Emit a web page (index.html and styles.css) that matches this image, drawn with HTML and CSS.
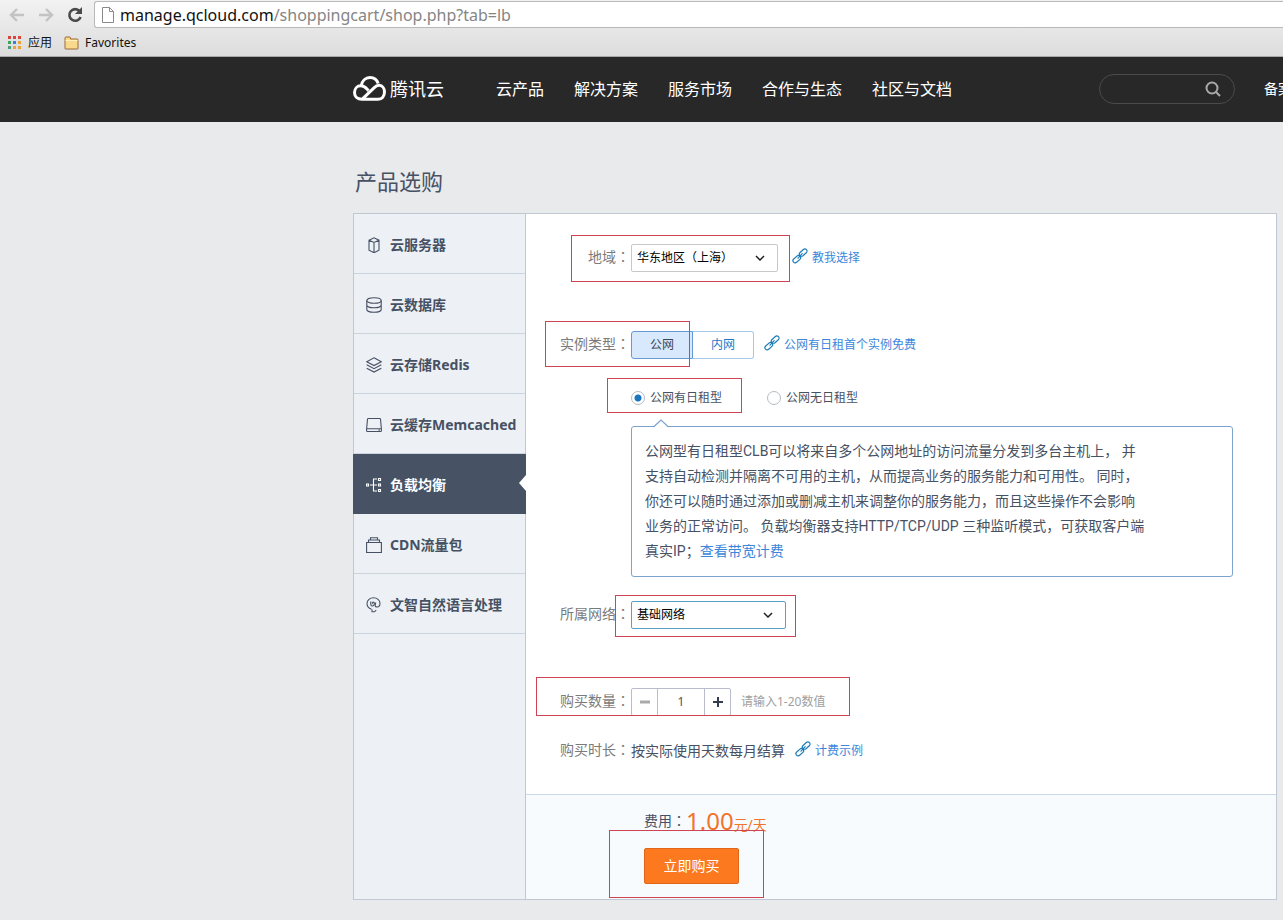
FILE: index.html
```html
<!DOCTYPE html>
<html lang="zh-CN">
<head>
<meta charset="utf-8">
<title>产品选购</title>
<link rel="stylesheet" href="styles.css">
</head>
<body>
<svg class="defs" width="0" height="0" aria-hidden="true">
  <symbol id="link" viewBox="0 0 16 16">
    <g fill="none" stroke="currentColor" stroke-width="1.2" stroke-linecap="round">
      <rect x="6.8" y="2.400" width="8.800" height="4.400" rx="2.200" transform="rotate(-42 11.200 4.600)"/>
      <rect x="0.400" y="9" width="8.800" height="4.400" rx="2.200" transform="rotate(-42 4.800 11.200)"/>
      <path d="M6 10.200 10.200 5.700"/>
    </g>
  </symbol>
  <symbol id="chevron" viewBox="0 0 10 6">
    <path d="M1 1l4 4 4-4" fill="none" stroke="#222" stroke-width="1.5"/>
  </symbol>
</svg>

<div class="browser">
  <div class="toolbar">
    <button class="tool" type="button" aria-label="后退"><svg width="16" height="14" viewBox="0 0 16 14"><path d="M8 1 2 7l6 6M2 7h13" fill="none" stroke="#c3c3c3" stroke-width="2.4"/></svg></button>
    <button class="tool" type="button" aria-label="前进"><svg width="16" height="14" viewBox="0 0 16 14"><path d="m8 1 6 6-6 6M14 7H1" fill="none" stroke="#c3c3c3" stroke-width="2.4"/></svg></button>
    <button class="tool reload" type="button" aria-label="刷新"><svg width="16" height="16" viewBox="0 0 16 16"><path d="M12.6 4.2A5.8 5.8 0 1 0 13.6 10" fill="none" stroke="#4a4a4a" stroke-width="2.6"/><path d="M15 0v7H8z" fill="#4a4a4a"/></svg></button>
    <div class="address">
      <svg width="12" height="16" viewBox="0 0 12 16"><path d="M.5.5h7l4 4v11H.5z" fill="#fff" stroke="#8a8a8a"/><path d="M7.5.5v4h4" fill="none" stroke="#8a8a8a"/></svg>
      <span class="url"><span class="host">manage.qcloud.com</span>/shoppingcart/shop.php?tab=lb</span>
    </div>
  </div>
  <div class="bookmarks">
    <a class="bookmark" href="#"><svg width="14" height="14" viewBox="0 0 14 14"><path fill="#d9453d" d="M0 0h3v3H0zM5 0h3v3H5zM10 0h3v3h-3z"/><path fill="#3aa757" d="M0 5h3v3H0z"/><path fill="#3b7de0" d="M5 5h3v3H5z"/><path fill="#e8a33a" d="M10 5h3v3h-3zM5 10h3v3H5zM10 10h3v3h-3z"/><path fill="#4f9a78" d="M0 10h3v3H0z"/></svg>应用</a>
    <a class="bookmark" href="#"><svg width="15" height="14" viewBox="0 0 15 14"><path d="M1 12.5V2q0-1 1-1h3.5q1 0 1 1v1H13q1 0 1 1v8.500q0 .5-.5.5h-12q-.5 0-.5-.5z" fill="#fbd98a" stroke="#9a6a35"/><path d="M1.500 4.500h12" stroke="#fff0c4"/></svg>Favorites</a>
  </div>
</div>

<header class="site">
  <a class="logo" href="#">
    <svg width="33" height="25" viewBox="0 0 33 25"><g fill="none" stroke="#fff" stroke-width="3"><path d="M8.300 9.800C9 4.800 12.500 1.600 17 1.600c4 0 7 2.500 8.200 6"/><path d="m9 23.300 12-11.500c2-1.900 3.700-2.600 5.300-2.500 3 .2 5.200 3 5.200 6.500 0 4.300-2.500 7.500-6.500 7.500H9c-4.500 0-7.500-2.700-7.500-6.700 0-4 2.800-6.800 6.300-6.800 2.700 0 4.500 1.300 6.200 3.200l1.500 1.600"/></g></svg>
    <span>腾讯云</span>
  </a>
  <nav class="menu">
    <a href="#">云产品</a><a href="#">解决方案</a><a href="#">服务市场</a><a href="#">合作与生态</a><a href="#">社区与文档</a>
  </nav>
  <div class="search">
    <input type="text" aria-label="搜索">
    <button type="button" aria-label="搜索"><svg width="16" height="16" viewBox="0 0 16 16"><g fill="none" stroke="#aaa" stroke-width="2"><circle cx="7" cy="7" r="5.500"/><path d="m11 11 4 4"/></g></svg></button>
  </div>
  <a class="record" href="#">备案</a>
</header>

<main class="page">
  <h1>产品选购</h1>
  <div class="panel">
    <nav class="side">
      <a href="#"><svg viewBox="0 0 16 16"><path d="M3 3.200 8 .8l5 2.400v10L8.500 15.500h-1L3 13.200zM3 3.200l5 2.300 5-2.300M8 5.500v10"/></svg>云服务器</a>
      <a href="#"><svg viewBox="0 0 16 16"><ellipse cx="8" cy="3.500" rx="7.200" ry="2.800"/><path d="M.8 3.500v9c0 1.500 3.200 2.800 7.200 2.800s7.200-1.300 7.200-2.800v-9M.8 8c0 1.500 3.200 2.800 7.200 2.800s7.200-1.300 7.200-2.800"/></svg>云数据库</a>
      <a href="#"><svg viewBox="0 0 16 16"><path d="M8 .8 15.300 4.700 8 8.600.7 4.700zM.7 7.800 8 11.700l7.300-3.900M.7 11.200 8 15.100l7.300-3.900"/></svg>云存储Redis</a>
      <a href="#"><svg viewBox="0 0 16 16"><path d="M2.300 1.500h11.400q.8 0 .8.800l.9 9.700v1.700q0 .8-.8.800H1.400q-.8 0-.8-.8V12l.9-9.700q0-.8.8-.8zM.7 11.700h14.600M12.500 13.100h1.300"/></svg>云缓存Memcached</a>
      <a class="active" href="#"><svg viewBox="0 0 16 16"><path d="M.5 7h2v2h-2zM12.500 1.500h2v2h-2zM12.500 7h2v2h-2zM12.500 12.500h2v2h-2zM4 8h7M11 2H7.500v12H11"/></svg>负载均衡</a>
      <a href="#"><svg viewBox="0 0 16 16"><path d="M.6 5.500h14.800v10H.6zM2.500 5.500v-2.500h11v2.500M4.500 3V.8h7V3"/></svg>CDN流量包</a>
      <a href="#"><svg viewBox="0 0 16 16"><path d="M5.500 12.200C2.500 11.200 1 9 1 6.500 1 3 4 .8 7.500.8S14 3.200 14 6.200c0 2.200-1.300 3.800-3 3.800-1.500 0-2-.9-1.700-2.300l.4-2.200M5 4.500c-1 3 .2 4.700 1.700 4.500 1.400-.2 1.800-2 1.500-3.500-1.200-1-2.200.2-1.800 1.500M6 12.500v2.300h2.500l1.700-1.600"/></svg>文智自然语言处理</a>
    </nav>

    <form class="content">
      <div class="fields">
        <div class="row">
          <span class="mark mark-region"></span>
          <label class="label" for="region">地域<span class="colon" lang="zh-TW">：</span></label>
          <div class="select">
            <select id="region"><option>华东地区（上海）</option></select>
            <svg width="10" height="6"><use href="#chevron"/></svg>
          </div>
          <a class="help" href="#"><svg width="16" height="16"><use href="#link"/></svg>教我选择</a>
        </div>

        <div class="row spaced">
          <span class="mark mark-type"></span>
          <span class="label">实例类型<span class="colon" lang="zh-TW">：</span></span>
          <div class="segments"><button class="on" type="button">公网</button><button type="button">内网</button></div>
          <a class="help" href="#"><svg width="16" height="16"><use href="#link"/></svg>公网有日租首个实例免费</a>
        </div>

        <div class="indent radios">
          <span class="mark mark-radio"></span>
          <label><input type="radio" name="rent" checked>公网有日租型</label>
          <label><input type="radio" name="rent">公网无日租型</label>
        </div>

        <div class="indent tip">
          <svg class="peak" width="16" height="9" viewBox="0 0 16 9"><path d="M0 9 8 1l8 8z" fill="#fff"/><path d="m.5 8 7.500-7 7.500 7" fill="none" stroke="#7da2ce" stroke-width="1.200"/></svg>
          公网型有日租型CLB可以将来自多个公网地址的访问流量分发到多台主机上， 并<br>
          支持自动检测并隔离不可用的主机，从而提高业务的服务能力和可用性。 同时，<br>
          你还可以随时通过添加或删减主机来调整你的服务能力，而且这些操作不会影响<br>
          业务的正常访问。 负载均衡器支持HTTP/TCP/UDP 三种监听模式，可获取客户端<br>
          真实IP；<a href="#">查看带宽计费</a>
        </div>

        <div class="row network">
          <span class="mark mark-network"></span>
          <label class="label" for="network">所属网络<span class="colon" lang="zh-TW">：</span></label>
          <div class="select wide">
            <select id="network"><option>基础网络</option></select>
            <svg width="10" height="6"><use href="#chevron"/></svg>
          </div>
        </div>

        <div class="row spaced">
          <span class="mark mark-count"></span>
          <label class="label" for="count">购买数量<span class="colon" lang="zh-TW">：</span></label>
          <div class="stepper">
            <button class="off" type="button" aria-label="减少"><svg width="12" height="12" viewBox="0 0 12 12"><path d="M1 6h10" stroke="currentColor" stroke-width="3"/></svg></button>
            <input id="count" type="text" value="1">
            <button type="button" aria-label="增加"><svg width="12" height="12" viewBox="0 0 12 12"><path d="M1 6h10M6 1v10" stroke="currentColor" stroke-width="2"/></svg></button>
          </div>
          <span class="hint">请输入1-20数值</span>
        </div>

        <div class="row period">
          <span class="label">购买时长<span class="colon" lang="zh-TW">：</span></span>
          <span>按实际使用天数每月结算</span>
          <a class="help" href="#"><svg width="16" height="16"><use href="#link"/></svg>计费示例</a>
        </div>
      </div>

      <div class="checkout">
        <span class="mark mark-buy"></span>
        <div class="price"><span>费用<span class="colon" lang="zh-TW">：</span></span><strong>1.00</strong><em>元/天</em></div>
        <button class="buy" type="submit">立即购买</button>
      </div>
    </form>
  </div>
</main>
</body>
</html>
```
FILE: styles.css
```css
* { box-sizing: border-box; }
body {
  margin: 0;
  background: #e8eaec;
  color: #475164;
  font: 14px/20px "Noto Sans", "Noto Sans CJK SC", sans-serif;
  overflow-x: hidden;
}
a { color: inherit; text-decoration: none; }
button, input, select { font: inherit; color: inherit; margin: 0; }
button { padding: 0; border: 0; background: none; cursor: pointer; }
svg { display: block; flex: none; }
.defs { position: absolute; }

/* browser chrome */
.browser {
  height: 57px;
  background: linear-gradient(#f2f2f2, #dcdcdc);
  border-bottom: 1px solid #a5aaa8;
}
.toolbar { display: flex; align-items: center; gap: 13px; height: 29px; padding-left: 9px; }
.reload { margin-right: -2px; }
.address {
  flex: 1;
  display: flex;
  align-items: center;
  gap: 6px;
  height: 27px;
  padding-left: 7px;
  background: #fff;
  border: 1px solid #b9b9b9;
  border-right: 0;
  border-radius: 3px 0 0 3px;
}
.url { color: #858585; font-size: 16px; white-space: nowrap; }
.host { color: #111; }
.bookmarks { display: flex; gap: 12px; padding: 4px 8px; }
.bookmark { display: flex; align-items: center; gap: 6px; color: #111; font-size: 12px; }

/* site header */
.site {
  display: flex;
  align-items: center;
  height: 65px;
  padding: 0 0 2px 353px;
  overflow: hidden;
  background: #282828;
  color: #fff;
  white-space: nowrap;
}
.logo { display: flex; align-items: center; gap: 4px; font-size: 18px; }
.menu { display: flex; gap: 30px; margin-left: 52px; font-size: 16px; }
.search {
  display: flex;
  align-items: center;
  flex: none;
  width: 136px;
  height: 30px;
  margin-left: auto;
  padding: 0 13px;
  border: 1px solid #4b4b4b;
  border-radius: 15px;
}
.search input { flex: 1; min-width: 0; border: 0; outline: 0; background: none; }
.record { width: 19px; margin-left: 29px; }

/* page */
.page { padding: 44px 6px 20px 353px; }
h1 { margin: 0 0 17px 2px; font-size: 22px; line-height: 30px; font-weight: 400; }
.panel { display: flex; border: 1px solid #c0c9d3; background: #fff; }
.side {
  flex: none;
  width: 172px;
  background: #edf1f6;
  border-right: 1px solid #c0c9d3;
}
.side a {
  display: flex;
  align-items: center;
  gap: 8px;
  height: 60px;
  padding: 2px 0 0 12px;
  border-bottom: 1px solid #cad5de;
  font-weight: 700;
  white-space: nowrap;
}
.side svg { width: 16px; height: 16px; fill: none; stroke: currentColor; stroke-width: 1.1; }
.side .active {
  position: relative;
  margin: 0 -1px;
  padding-left: 13px;
  border-color: #475365;
  background: #475365;
  color: #fff;
}
.side .active::after {
  content: "";
  position: absolute;
  right: 0;
  top: 21px;
  border: 8px solid transparent;
  border-right: 7px solid #fff;
  border-left: 0;
}
.content { flex: 1; min-width: 0; }
.fields { padding: 30px 43px 29px 0; }
.row { position: relative; display: flex; align-items: center; height: 28px; white-space: nowrap; }
.spaced { margin-top: 59px; }
.label { width: 105px; padding: 0 1px 2px 0; color: #7b7b7b; text-align: right; }
.colon { font-family: "Noto Sans CJK TC", sans-serif; line-height: 1; }
.indent { position: relative; margin-left: 105px; }

.select { position: relative; width: 147px; height: 28px; }
.select select {
  appearance: none;
  width: 100%;
  height: 28px;
  padding: 0 5px;
  border: 1px solid #c8c8c8;
  border-radius: 2px;
  background: #fff;
  color: #000;
  font-size: 12px;
}
.select svg { position: absolute; right: 13px; top: 11px; pointer-events: none; }
.select.wide { width: 155px; }
.select.wide select { border-color: #5a9fc8; }

.help { display: flex; align-items: center; gap: 4px; margin-left: 10px; color: #3c87da; font-size: 12px; }
.select + .help { margin-left: 14px; }
.help svg { margin-bottom: 4px; color: #1d7cb8; }

.segments { display: flex; width: 123px; height: 28px; }
.segments button {
  flex: 1;
  border: 1px solid #a9c8e8;
  border-left: 0;
  border-radius: 0 3px 3px 0;
  color: #1f78c4;
  font-size: 12px;
}
.segments .on {
  border: 1px solid #659bd4;
  border-radius: 3px 0 0 3px;
  background: #d8e9fd;
  color: #36475c;
}

.radios { display: flex; gap: 45px; margin-top: 29px; font-size: 12px; }
.radios label { display: flex; align-items: center; gap: 5px; }
.radios input {
  appearance: none;
  width: 14px;
  height: 14px;
  border: 1px solid #b4bbc3;
  border-radius: 50%;
  background: #fff;
}
.radios input:checked { background: radial-gradient(circle, #1b74c0 3px, #fff 4px); }

.tip {
  margin-top: 18px;
  padding: 12px 13px;
  border: 1px solid #7da2ce;
  border-radius: 3px;
  font-family: Roboto, "Noto Sans CJK SC", sans-serif;
  line-height: 25px;
  white-space: nowrap;
}
.tip a { color: #3c87da; }
.peak { position: absolute; left: 21px; top: -8px; }
.network { margin-top: 24px; }

.stepper { display: flex; width: 100px; height: 28px; border: 1px solid #b9bdcb; border-radius: 2px; }
.stepper button { display: grid; place-items: center; width: 25px; color: #333d4c; }
.stepper .off { color: #aaa; }
.stepper input {
  flex: 1;
  min-width: 0;
  padding: 0;
  border: solid #b9bdcb;
  border-width: 0 1px;
  outline: 0;
  text-align: center;
  font-size: 12px;
}
.hint { margin-left: 10px; color: #a0a0a0; font-size: 12px; }
.period { margin-top: 21px; }

.checkout {
  position: relative;
  padding: 11px 0 15px 118px;
  border-top: 1px solid #ccd9e4;
  background: #f8fbfe;
}
.price { display: flex; align-items: baseline; height: 42px; line-height: 30px; }
.price > span { align-self: flex-start; }
.price strong { color: #f0742b; font-size: 24px; font-weight: 400; }
.price em { color: #f0742b; font-style: normal; }
.buy {
  display: block;
  width: 95px;
  height: 36px;
  border: 1px solid #e0661a;
  border-radius: 2px;
  background: #fc7920;
  color: #fff;
}

/* red highlight frames drawn over the form */
.mark { position: absolute; z-index: 2; border: 1px solid #cf4454; pointer-events: none; }
.mark-region { left: 45px; top: -9px; width: 219px; height: 47px; }
.mark-type { left: 19px; top: -10px; width: 145px; height: 46px; }
.mark-radio { left: -24px; top: -10px; width: 135px; height: 35px; }
.mark-network { left: 89px; top: -6px; width: 181px; height: 42px; }
.mark-count { left: 10px; top: -11px; width: 314px; height: 39px; }
.mark-buy { left: 83px; top: 35px; width: 155px; height: 68px; }
```
